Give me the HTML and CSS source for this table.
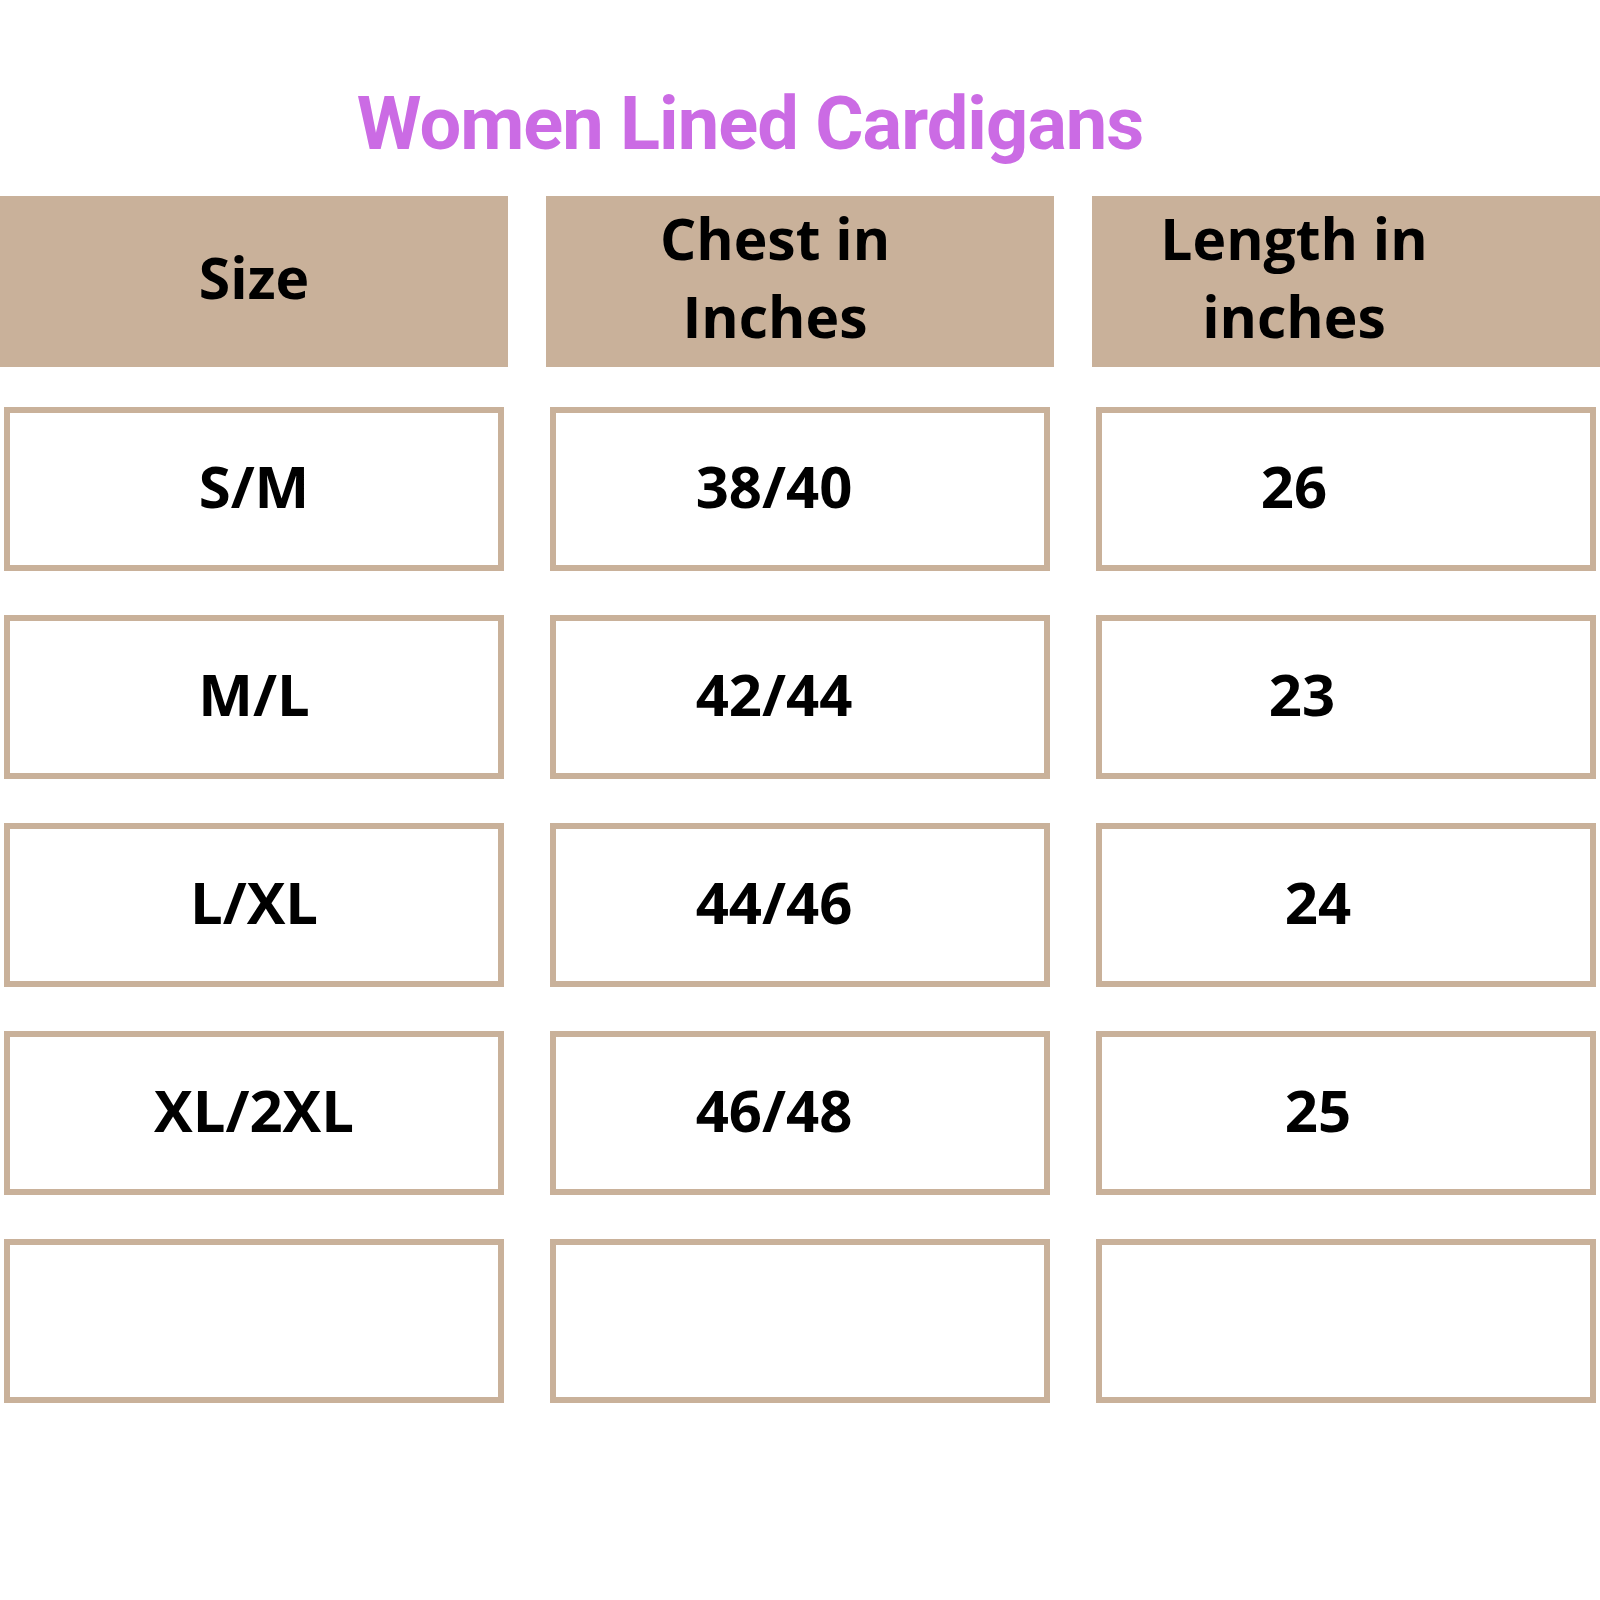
FILE: index.html
```html
<!DOCTYPE html>
<html lang="en">
<head>
<meta charset="utf-8">
<title>Women Lined Cardigans</title>
<link rel="stylesheet" href="styles.css">
</head>
<body>
  <h1 class="title">Women Lined Cardigans</h1>
  <div class="head-row">
    <div class="head-cell">Size</div>
    <div class="head-cell col-2">Chest in<br>Inches</div>
    <div class="head-cell col-3">Length in<br>inches</div>
  </div>
  <div class="body-grid">
    <div class="cell">S/M</div>
    <div class="cell col-2">38/40</div>
    <div class="cell col-3">26</div>

    <div class="cell">M/L</div>
    <div class="cell col-2">42/44</div>
    <div class="cell col-3 shift-a">23</div>

    <div class="cell">L/XL</div>
    <div class="cell col-2">44/46</div>
    <div class="cell col-3 shift-b">24</div>

    <div class="cell">XL/2XL</div>
    <div class="cell col-2">46/48</div>
    <div class="cell col-3 shift-b">25</div>

    <div class="cell"></div>
    <div class="cell col-2"></div>
    <div class="cell col-3"></div>
  </div>
</body>
</html>
```

FILE: styles.css
```css
html, body {
  margin: 0;
  padding: 0;
  background: #ffffff;
}

body {
  width: 1600px;
  height: 1600px;
  font-family: "Open Sans", "DejaVu Sans", sans-serif;
  color: #000000;
}

.title {
  margin: 0 0 36px 0;
  padding: 88px 100px 0 0;
  font-family: Roboto, "Open Sans", sans-serif;
  font-weight: 700;
  font-size: 74px;
  line-height: 72px;
  letter-spacing: -1px;
  color: #cb6be4;
  text-align: center;
}

.head-row {
  display: grid;
  grid-template-columns: repeat(3, 508px);
  column-gap: 38px;
  margin-bottom: 40px;
}

.head-cell {
  height: 171px;
  box-sizing: border-box;
  padding-bottom: 10px;
  background: #c9b19a;
  display: flex;
  align-items: center;
  justify-content: center;
  text-align: center;
  font-weight: 700;
  font-size: 57px;
  line-height: 78px;
}

.head-cell.col-2 { padding-right: 50px; }
.head-cell.col-3 { padding-right: 104px; }

.body-grid {
  display: grid;
  grid-template-columns: repeat(3, 508px);
  column-gap: 38px;
  row-gap: 44px;
}

.cell {
  margin: 0 4px;
  height: 164px;
  box-sizing: border-box;
  border: 6px solid #c9b19a;
  padding-bottom: 6px;
  display: flex;
  align-items: center;
  justify-content: center;
  font-weight: 700;
  font-size: 58px;
  line-height: 1;
}

.cell.col-2 { padding-right: 52px; }
.cell.col-3 { padding-right: 104px; }
.cell.col-3.shift-a { padding-right: 88px; }
.cell.col-3.shift-b { padding-right: 56px; }
```
